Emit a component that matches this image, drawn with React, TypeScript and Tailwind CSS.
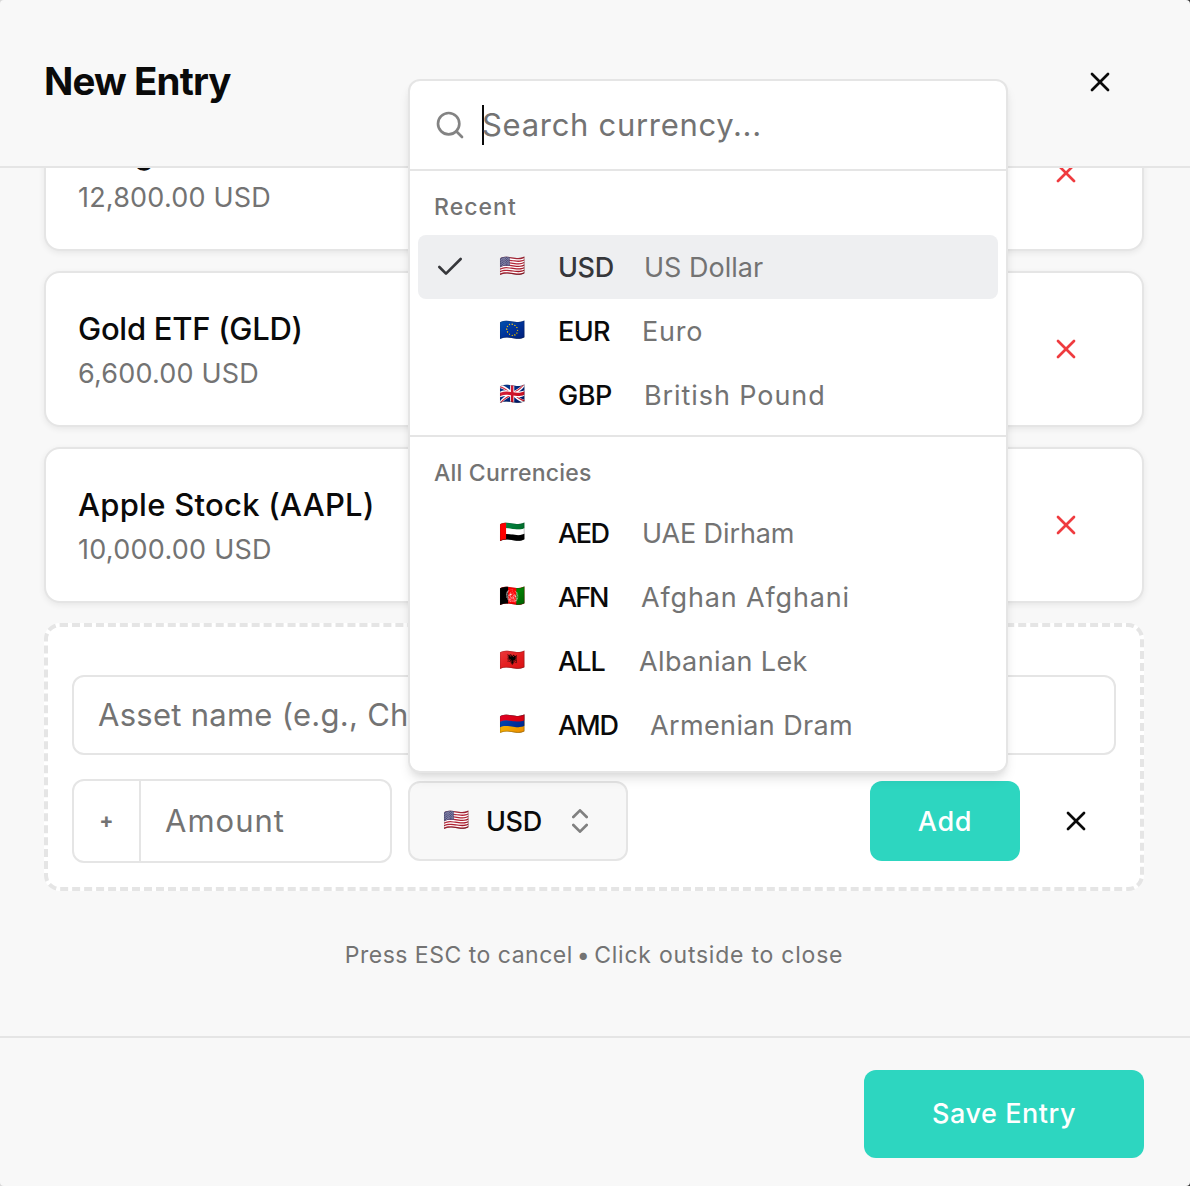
import { Check, ChevronsUpDown, X } from 'lucide-react';

type Asset = { name: string; nameClass: string; amount: string; amountClass: string };

const assets: Asset[] = [
  { name: 'Vanguard S&P 500', nameClass: 'tracking-[-0.06px]', amount: '12,800.00 USD', amountClass: 'tracking-[0.2px]' },
  { name: 'Gold ETF (GLD)', nameClass: 'tracking-[-0.27px]', amount: '6,600.00 USD', amountClass: 'tracking-[0.18px]' },
  { name: 'Apple Stock (AAPL)', nameClass: 'tracking-[0.27px]', amount: '10,000.00 USD', amountClass: 'tracking-[0.26px]' },
];

type Currency = { flag: string; code: string; codeClass: string; name: string; nameClass: string };

const recent: Currency[] = [
  { flag: '🇺🇸', code: 'USD', codeClass: 'w-[87px] pl-px tracking-[-0.4px]', name: 'US Dollar', nameClass: 'tracking-[0.01px]' },
  { flag: '🇪🇺', code: 'EUR', codeClass: 'w-[85px] pl-px tracking-[-0.6px]', name: 'Euro', nameClass: 'tracking-[0.8px]' },
  { flag: '🇬🇧', code: 'GBP', codeClass: 'w-[87px] pl-px tracking-[-0.4px]', name: 'British Pound', nameClass: 'tracking-[0.92px]' },
];

const all: Currency[] = [
  { flag: '🇦🇪', code: 'AED', codeClass: 'w-[85px] pl-px tracking-[-1.5px]', name: 'UAE Dirham', nameClass: 'tracking-[-0.1px]' },
  { flag: '🇦🇫', code: 'AFN', codeClass: 'w-[84px] pl-px tracking-[-2px]', name: 'Afghan Afghani', nameClass: 'tracking-[0.85px]' },
  { flag: '🇦🇱', code: 'ALL', codeClass: 'w-[82px] pl-px tracking-[-1px]', name: 'Albanian Lek', nameClass: 'tracking-[0.38px]' },
  { flag: '🇦🇲', code: 'AMD', codeClass: 'w-[93px] pl-px tracking-[-1.2px]', name: 'Armenian Dram', nameClass: 'tracking-[0.37px]' },
];

function Flag({ children }: { children: string }) {
  return (
    <span className="relative -top-px w-[26px] shrink-0 whitespace-nowrap font-['Noto_Color_Emoji',sans-serif] text-[21.2px] leading-8">
      {children}
    </span>
  );
}

function SearchIcon() {
  return (
    <svg
      className="size-8 shrink-0 text-[#0a0a0a] opacity-50"
      viewBox="0 0 24 24"
      fill="none"
      stroke="currentColor"
      strokeWidth="2"
      strokeLinecap="round"
      strokeLinejoin="round"
    >
      <circle cx="11" cy="11" r="8" />
      <path d="m21 21-4.3-4.3" />
    </svg>
  );
}

function AssetCard({ asset }: { asset: Asset }) {
  return (
    <div className="flex h-[156px] shrink-0 items-center justify-between rounded-2xl border-2 border-[#e5e5e5] bg-white pl-8 pr-[60px] shadow-[0_2px_6px_rgba(0,0,0,0.07)]">
      <div className="pt-[5px]">
        <div className={`text-[31px] font-medium leading-[44px] ${asset.nameClass}`}>{asset.name}</div>
        <div className={`text-[27px] leading-[45px] text-[#737373] ${asset.amountClass}`}>{asset.amount}</div>
      </div>
      <X className="size-8 text-[#ef3b3f]" />
    </div>
  );
}

function CurrencyRow({ currency, selected = false }: { currency: Currency; selected?: boolean }) {
  return (
    <div className={`flex h-16 items-center rounded-lg px-4 text-[27px] ${selected ? 'bg-[#eeeff1] text-[#36373b]' : ''}`}>
      <div className="mr-[33px] size-8 shrink-0">{selected && <Check className="size-8" />}</div>
      <Flag>{currency.flag}</Flag>
      <span className={`ml-8 shrink-0 pt-0.5 font-medium ${currency.codeClass}`}>{currency.code}</span>
      <span className={`pt-0.5 text-[#737373] ${currency.nameClass}`}>{currency.name}</span>
    </div>
  );
}

function CurrencyMenu() {
  return (
    <div className="absolute left-[408px] top-[79px] h-[694px] w-[600px] overflow-hidden rounded-xl border-2 border-[#e5e5e5] bg-white shadow-[0_8px_12px_-2px_rgba(0,0,0,0.1),0_4px_8px_-4px_rgba(0,0,0,0.1)]">
      <div className="flex h-[90px] items-center border-b-2 border-[#e5e5e5] px-6">
        <SearchIcon />
        <div className="ml-4 h-10 w-0.5 bg-[#0a0a0a]" />
        <span className="-ml-0.5 text-[31px] tracking-[0.7px] text-[#737373]">Search currency...</span>
      </div>
      <div className="border-b-2 border-[#e5e5e5] p-2">
        <div className="px-4 text-[23px] font-medium leading-[56px] tracking-[1.06px] text-[#737373]">Recent</div>
        {recent.map((c, i) => (
          <CurrencyRow key={c.code} currency={c} selected={i === 0} />
        ))}
      </div>
      <div className="p-2">
        <div className="px-4 text-[23px] font-medium leading-[56px] tracking-[0.2px] text-[#737373]">All Currencies</div>
        {all.map((c) => (
          <CurrencyRow key={c.code} currency={c} />
        ))}
      </div>
    </div>
  );
}

export default function App() {
  return (
    <div className="relative h-[1186px] w-[1190px] overflow-hidden bg-linear-to-r from-[#d8d8d8] to-[#333333] font-[Inter,sans-serif] text-[#0a0a0a]">
      <div className="flex h-full flex-col rounded-[4px] bg-[#f8f8f8]">
        <header className="flex h-[168px] shrink-0 items-center justify-between border-b-2 border-[#e5e5e5] pb-0.5 pl-11 pr-[74px]">
          <h1 className="text-[38.5px] font-bold tracking-[-0.88px]">New Entry</h1>
          <X className="size-8" />
        </header>

        <main className="flex h-[868px] shrink-0 flex-col overflow-hidden pl-11 pr-[46px]">
          <div className="-mt-[73px] flex shrink-0 flex-col gap-5">
            {assets.map((a) => (
              <AssetCard key={a.name} asset={a} />
            ))}

            <div className="flex h-[268px] shrink-0 flex-col gap-6 rounded-2xl border-4 border-dashed border-[#e5e5e5] bg-white px-6 pb-6 pt-12">
              <div className="flex h-20 shrink-0 items-center overflow-hidden whitespace-nowrap rounded-xl border-2 border-[#e5e5e5] px-6 text-[31px] tracking-[0.27px] text-[#737373]">
                Asset name (e.g., Checking Account)
              </div>
              <div className="flex h-[84px] items-center">
                <div className="flex h-full w-80 rounded-xl border-2 border-[#e5e5e5] text-[#737373]">
                  <div className="flex w-[67px] items-center justify-center border-r-2 border-[#e5e5e5] pb-px text-[21px] font-bold">
                    +
                  </div>
                  <div className="flex items-center pl-6 text-[31px] tracking-[1px]">Amount</div>
                </div>
                <button className="ml-4 flex h-20 w-[220px] items-center rounded-xl border-2 border-[#e5e5e5] bg-[#f8f8f8] pl-[33px] text-[27px] font-medium">
                  <Flag>🇺🇸</Flag>
                  <span className="ml-[17px] w-[78px] pt-0.5 text-left tracking-[-0.4px]">USD</span>
                  <ChevronsUpDown className="size-8 opacity-50" />
                </button>
                <button className="ml-auto h-20 w-[150px] rounded-xl bg-[#2dd6c0] pt-0.5 text-[27px] font-medium tracking-[0.69px] text-white">
                  Add
                </button>
                <X className="ml-10 mr-6 size-8" />
              </div>
            </div>
          </div>
          <p className="mt-12 text-center text-[23px] leading-8 tracking-[0.5px] text-[#737373]">
            Press ESC to cancel <span className="-mx-[3px]">•</span>{' '}
            <span className="tracking-[0.77px]">Click outside to close</span>
          </p>
        </main>

        <footer className="flex flex-1 items-start justify-end border-t-2 border-[#e5e5e5] pr-[46px] pt-8">
          <button className="h-[88px] w-[280px] rounded-xl bg-[#2dd6c0] text-[27px] font-medium tracking-[0.56px] text-white">
            Save Entry
          </button>
        </footer>
      </div>

      <CurrencyMenu />
    </div>
  );
}
